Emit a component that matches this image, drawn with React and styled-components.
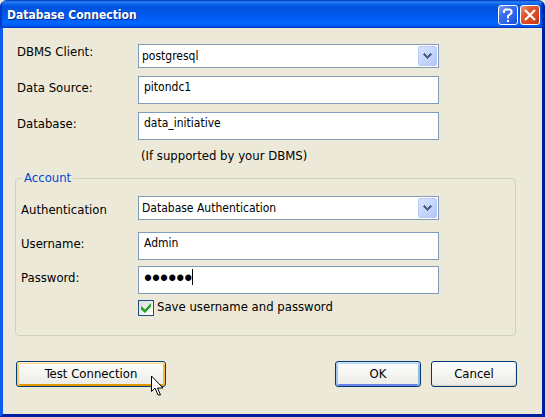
import React, { useState } from 'react';
import styled, { createGlobalStyle } from 'styled-components';

const GlobalStyle = createGlobalStyle`
  *, *::before, *::after { box-sizing: border-box; }
  body {
    margin: 0;
    background: #ece9d8;
    color: #000;
  }
  body, button, input, select {
    font-family: "DejaVu Sans Condensed", "DejaVu Sans", Tahoma, sans-serif;
    font-size: 13px;
    line-height: 16px;
  }
`;

const Window = styled.main`
  display: flex;
  flex-direction: column;
  min-height: 100vh;
  background: #ece9d8;
  border-radius: 7px 7px 0 0;
  overflow: hidden;
`;

const TitleBar = styled.header`
  display: flex;
  align-items: center;
  gap: 2px;
  height: 28px;
  padding: 2px 5px 0 7px;
  background: linear-gradient(
    #0046d0 0, #2b83f5 2px, #0a63ee 4px, #0054e0 7px,
    #0055e6 13px, #005ff5 18px, #0066ff 24px, #0058ee 26px, #0044cc 28px
  );
  box-shadow: inset 2px 0 1px #0038c8, inset -3px 0 2px #0022a0;
`;

const Title = styled.h1`
  flex: 1;
  margin: 0;
  color: #fff;
  font-size: 12px;
  font-weight: bold;
  line-height: 18px;
  text-shadow: 1px 1px #0a2a90;
`;

const CaptionButton = styled.button`
  display: grid;
  place-items: center;
  width: 20px;
  height: 20px;
  padding: 0;
  border: 1px solid #fff;
  border-radius: 3px;
  background: ${({ $danger }) =>
    $danger
      ? 'linear-gradient(135deg, #ee9478 0%, #e0552f 35%, #d8431c 75%, #b93010 100%)'
      : 'linear-gradient(135deg, #7da2f5 0%, #3c6ceb 35%, #2660ee 75%, #1744c0 100%)'};
`;

const Body = styled.form`
  flex: 1;
  padding: 16px 26px 24px 12px;
  border: solid #0831d9;
  border-width: 0 3px 3px;
  border-color: #001ea0 #001ea0 #001ea0 #0f5cf0;
`;

const Stack = styled.div`
  display: flex;
  flex-direction: column;
  gap: 8px;
  padding: 0 77px 0 2px;
`;

const Row = styled.div`
  display: grid;
  grid-template-columns: ${({ $label }) => $label}px 1fr;
  align-items: start;
`;

const Label = styled.label`
  padding-top: ${({ $drop = 4 }) => $drop}px;
`;

const TextInput = styled.input`
  width: 100%;
  height: 28px;
  padding: 0 5px 6px;
  border: 1px solid #7f9db9;
  border-radius: 0;
  background: #fff;
  color: #000;
  font-size: 12px;
  outline: none;
`;

const PasswordBox = styled.div`
  position: relative;
  display: grid;
`;

const PasswordInput = styled(TextInput)`
  padding-bottom: 4px;
  font-family: "Liberation Sans", Arial, sans-serif;
  font-size: 23px;
`;

const Caret = styled.span`
  position: absolute;
  left: 54px;
  top: 3px;
  width: 1px;
  height: 16px;
  background: #000;
`;

const SelectBox = styled.div`
  display: grid;
  grid-template-columns: 1fr 21px;
`;

const NativeSelect = styled.select`
  grid-area: 1 / 1 / 2 / 3;
  width: 100%;
  height: 24px;
  padding: 0 24px 0 3px;
  border: 1px solid #7f9db9;
  border-radius: 0;
  background: #fff;
  color: #000;
  font-size: 12px;
  appearance: none;
  outline: none;
`;

const DropArrow = styled.span`
  grid-area: 1 / 2;
  display: grid;
  place-items: center;
  width: 19px;
  height: 20px;
  margin-top: 2px;
  border: 1px solid #b6c9f5;
  border-radius: 2px;
  background: linear-gradient(135deg, #d8e4ff, #c2d3fc 60%, #b3c7f6);
  pointer-events: none;
`;

const Hint = styled.p`
  margin: 0 0 0 124px;
`;

const Account = styled.fieldset`
  display: grid;
  min-width: 0;
  margin: 6px 0 0;
  padding: 10px 76px 19px 5px;
  border: 1px solid #d0d0bf;
  border-radius: 4px;
`;

const Legend = styled.legend`
  margin-left: 1px;
  padding: 0 2px;
  color: #0046d5;
`;

const AccountRows = styled.div`
  display: flex;
  flex-direction: column;
  gap: 6px;
`;

const AuthRow = styled(Row)`
  margin-bottom: 6px;
`;

const SaveRow = styled.div`
  display: flex;
  align-items: center;
  gap: 3px;
  padding-left: 117px;
`;

const CheckFrame = styled.span`
  display: grid;
  place-items: center;
  > * { grid-area: 1 / 1; }
  > svg { pointer-events: none; }
`;

const Checkbox = styled.input`
  width: 16px;
  height: 16px;
  margin: 0;
  border: 1px solid #1c5180;
  background: linear-gradient(135deg, #dcdcd7, #fff);
  appearance: none;
`;

const SaveLabel = styled.label`
  line-height: 14px;
  padding-bottom: 2px;
`;

const Actions = styled.footer`
  display: flex;
  gap: 10px;
  margin-top: 25px;
  padding-left: 1px;
  margin-right: -1px;
`;

const glow = {
  hover: 'inset 0 1px #fff0cf, inset 0 2px #fdd889, inset 2px 0 #fbca6a, inset -2px 0 #f8b636, inset 0 -2px #e59700',
  primary: 'inset 0 1px #cee7ff, inset 0 2px #bcd4f6, inset 2px 0 #a5c3f0, inset -2px 0 #98b8ea, inset 0 -2px #6982ee',
  plain: 'inset 0 -1px #d6d0c5, inset -1px 0 #e8e5dd, inset 0 -2px #e9e7df',
};

const PushButton = styled.button`
  width: ${({ $wide }) => ($wide ? 150 : 86)}px;
  height: 26px;
  padding: 0;
  border: 1px solid #003c74;
  border-radius: 3px;
  background: linear-gradient(#fff, #f4f4f0 50%, #ecebe6);
  box-shadow: ${({ $tone }) => glow[$tone]};
  color: #000;
`;

const HoverTarget = styled.div`
  position: relative;
  margin-right: auto;
`;

const Pointer = styled.svg`
  position: absolute;
  left: 135px;
  top: 14px;
  pointer-events: none;
`;

function Select({ id, value }) {
  return (
    <SelectBox>
      <NativeSelect id={id} defaultValue={value}>
        <option>{value}</option>
      </NativeSelect>
      <DropArrow>
        <svg width="9" height="6" viewBox="0 0 9 6" shapeRendering="crispEdges" aria-hidden="true">
          <path
            fill="#4d6185"
            d="M1 0h1v1h1v1h1v1h1v-1h1v-1h1v-1h1v1h1v1h-1v1h-1v1h-1v1h-1v1h-1v-1h-1v-1h-1v-1h-1v-1h-1v-1h1z"
          />
        </svg>
      </DropArrow>
    </SelectBox>
  );
}

export default function App() {
  const [save, setSave] = useState(true);
  return (
    <Window>
      <GlobalStyle />
      <TitleBar>
        <Title>Database Connection</Title>
        <CaptionButton type="button" aria-label="Help">
          <svg width="14" height="16" viewBox="0 0 14 16" fill="none" stroke="#fff" strokeWidth="2" aria-hidden="true">
            <path d="M3 6V4l1.500-1.500h4.500L10.500 4v2L7 9v2.500" />
            <path d="M7 13v2" />
          </svg>
        </CaptionButton>
        <CaptionButton type="button" aria-label="Close" $danger>
          <svg width="12" height="12" viewBox="0 0 12 12" fill="none" stroke="#fff" strokeWidth="2.200" aria-hidden="true">
            <path d="M1 1l10 10M11 1L1 11" />
          </svg>
        </CaptionButton>
      </TitleBar>
      <Body onSubmit={(e) => e.preventDefault()}>
        <Stack>
          <Row $label={121}>
            <Label htmlFor="client" $drop={0}>DBMS Client:</Label>
            <Select id="client" value="postgresql" />
          </Row>
          <Row $label={121}>
            <Label htmlFor="source">Data Source:</Label>
            <TextInput id="source" defaultValue="pitondc1" />
          </Row>
          <Row $label={121}>
            <Label htmlFor="database">Database:</Label>
            <TextInput id="database" defaultValue="data_initiative" />
          </Row>
          <Hint>(If supported by your DBMS)</Hint>
        </Stack>
        <Account>
          <Legend>Account</Legend>
          <AccountRows>
            <AuthRow $label={117}>
              <Label htmlFor="auth" $drop={6}>Authentication</Label>
              <Select id="auth" value="Database Authentication" />
            </AuthRow>
            <Row $label={117}>
              <Label htmlFor="username">Username:</Label>
              <TextInput id="username" defaultValue="Admin" />
            </Row>
            <Row $label={117}>
              <Label htmlFor="password">Password:</Label>
              <PasswordBox>
                <PasswordInput id="password" type="password" defaultValue="secret" />
                <Caret />
              </PasswordBox>
            </Row>
            <SaveRow>
              <CheckFrame>
                <Checkbox id="save" type="checkbox" checked={save} onChange={(e) => setSave(e.target.checked)} />
                {save && (
                  <svg width="12" height="10" viewBox="0 0 12 10" aria-hidden="true">
                    <path d="M1 3l4 3.500L11 0v3.500L5 10 1 6.500z" fill="#21a121" />
                  </svg>
                )}
              </CheckFrame>
              <SaveLabel htmlFor="save">Save username and password</SaveLabel>
            </SaveRow>
          </AccountRows>
        </Account>
        <Actions>
          <HoverTarget>
            <PushButton type="button" $wide $tone="hover">Test Connection</PushButton>
            <Pointer width="13" height="21" viewBox="0 0 13 21" aria-hidden="true">
              <path d="M.5 1v15.500L4 13l3 7h2.500l-3-7H12z" fill="#fff" stroke="#000" />
            </Pointer>
          </HoverTarget>
          <PushButton type="submit" $tone="primary">OK</PushButton>
          <PushButton type="button" $tone="plain">Cancel</PushButton>
        </Actions>
      </Body>
    </Window>
  );
}
